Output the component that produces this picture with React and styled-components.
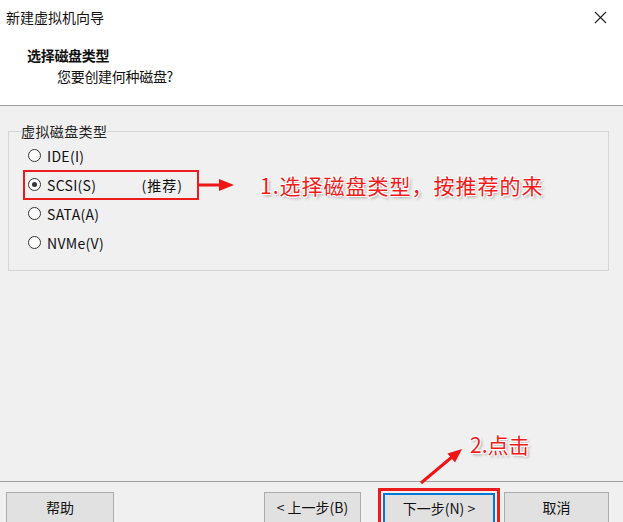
import styled, { createGlobalStyle } from "styled-components";

const GlobalStyle = createGlobalStyle`
  html, body {
    margin: 0;
    padding: 0;
    background: #f0f0f0;
  }
  * {
    box-sizing: border-box;
  }
`;

const options = [
  { id: "ide", label: "IDE(I)" },
  { id: "scsi", label: "SCSI(S)", tag: "(推荐)", checked: true },
  { id: "sata", label: "SATA(A)" },
  { id: "nvme", label: "NVMe(V)" },
];

export default function App() {
  return (
    <>
      <GlobalStyle />
      <Window>
        <Header>
          <TitleBar>
            <Title>新建虚拟机向导</Title>
            <CloseButton aria-label="关闭">
              <svg width="13" height="13" viewBox="0 0 13 13">
                <path d="M1 1 L12 12 M12 1 L1 12" stroke="#222" strokeWidth="1.1" />
              </svg>
            </CloseButton>
          </TitleBar>
          <Heading>选择磁盘类型</Heading>
          <SubHeading>您要创建何种磁盘?</SubHeading>
        </Header>

        <Body>
          <GroupBox>
            <Legend>虚拟磁盘类型</Legend>
            {options.map((opt) => (
              <OptionLine key={opt.id}>
                <Option $highlight={opt.checked}>
                  <Radio $checked={opt.checked} />
                  <OptionLabel>{opt.label}</OptionLabel>
                  {opt.tag && <Tag>{opt.tag}</Tag>}
                </Option>
                {opt.checked && (
                  <>
                    <svg width="36" height="14" viewBox="0 0 36 14">
                      <path d="M0 7 H22" stroke="#f01414" strokeWidth="3" />
                      <polygon points="20,1 35,7 20,13" fill="#f01414" />
                    </svg>
                    <Note $first>1.选择磁盘类型，按推荐的来</Note>
                  </>
                )}
              </OptionLine>
            ))}
          </GroupBox>
        </Body>

        <Footer>
          <Button $width={108}>帮助</Button>
          <Spacer />
          <Button $width={97}>&lt; 上一步(B)</Button>
          <Highlight>
            <Button $width={112} $primary>
              下一步(N) &gt;
            </Button>
          </Highlight>
          <Button $width={105}>取消</Button>
        </Footer>

        <ClickNote>
          <svg width="50" height="42" viewBox="0 0 50 42">
            <path d="M3 37 L34 11" stroke="#f01414" strokeWidth="3" />
            <polygon points="44,3 37,16.6 29.4,7.4" fill="#f01414" />
          </svg>
          <Note>2.点击</Note>
        </ClickNote>
      </Window>
    </>
  );
}

const Window = styled.div`
  position: relative;
  width: 623px;
  height: 522px;
  display: flex;
  flex-direction: column;
  background: #f0f0f0;
  overflow: hidden;
  font-family: "Noto Sans CJK SC", "Noto Sans", sans-serif;
  color: #111;
`;

const Header = styled.header`
  height: 106px;
  background: #fff;
  border-bottom: 1px solid #a0a0a0;
  display: flex;
  flex-direction: column;
`;

const TitleBar = styled.div`
  height: 34px;
  display: flex;
  align-items: center;
  justify-content: space-between;
  padding: 0 16px 0 6px;
`;

const Title = styled.span`
  font-size: 14px;
  letter-spacing: 0;
`;

const CloseButton = styled.span`
  display: flex;
  align-items: center;
`;

const Heading = styled.div`
  margin: 11px 0 0 27px;
  font-size: 14px;
  font-weight: 700;
  line-height: 20px;
  letter-spacing: -0.3px;
`;

const SubHeading = styled.div`
  margin: 1px 0 0 57px;
  font-size: 14px;
  line-height: 20px;
  letter-spacing: -0.3px;
`;

const Body = styled.main`
  flex: 1;
  border-bottom: 1px solid #a0a0a0;
  padding: 15px 0 0 8px;
`;

const GroupBox = styled.fieldset`
  width: 601px;
  margin: 0;
  padding: 0 0 13px 13px;
  border: 1px solid #d6d6d6;
`;

const Legend = styled.legend`
  padding: 0;
  margin-left: -1px;
  font-size: 14px;
  line-height: 20px;
  color: #222;
  letter-spacing: 0.4px;
`;

const OptionLine = styled.div`
  display: flex;
  align-items: center;
  height: 29px;
  margin-left: 1px;
`;

const Option = styled.div`
  width: 176px;
  height: 30px;
  display: flex;
  align-items: center;
  padding: 0 14px 0 3px;
  border: 2px solid ${(p) => (p.$highlight ? "#ec1c1c" : "transparent")};
  font-size: 14px;
`;

const Radio = styled.span`
  position: relative;
  width: 13px;
  height: 13px;
  border-radius: 50%;
  border: 1px solid #333;
  background: #fff;
  flex-shrink: 0;
  margin-right: 6px;
  &::after {
    content: "";
    display: ${(p) => (p.$checked ? "block" : "none")};
    position: absolute;
    left: 3px;
    top: 3px;
    width: 5px;
    height: 5px;
    border-radius: 50%;
    background: #333;
  }
`;

const OptionLabel = styled.span`
  line-height: 1;
  letter-spacing: 0.3px;
`;

const Tag = styled.span`
  margin-left: auto;
  line-height: 1;
  letter-spacing: 1px;
`;

const Note = styled.span`
  margin-left: ${(p) => (p.$first ? "25px" : "2px")};
  font-size: ${(p) => (p.$first ? "21px" : "21px")};
  color: #f51a1a;
  white-space: nowrap;
  letter-spacing: ${(p) => (p.$first ? "1px" : "0")};
  text-shadow: 1px 1px 0 #fff, -1px -1px 0 #fff, 1px -1px 0 #fff,
    -1px 1px 0 #fff, 2px 2px 3px rgba(0, 0, 0, 0.35);
`;

const Footer = styled.footer`
  height: 40px;
  display: flex;
  align-items: flex-start;
  padding: 10px 14px 0 6px;
`;

const Spacer = styled.div`
  flex: 1;
`;

const Button = styled.button`
  width: ${(p) => p.$width}px;
  height: 32px;
  margin: 0;
  background: #e1e1e1;
  border: ${(p) => (p.$primary ? "2px solid #0078d7" : "1px solid #adadad")};
  font-family: inherit;
  font-size: 14px;
  color: #111;
  padding: 0 0 3px;
`;

const Highlight = styled.div`
  margin: -4px 4px 0 17px;
  padding: 2px;
  border: 3px solid #ec1c1c;
  display: flex;
`;

const ClickNote = styled.div`
  position: absolute;
  left: 418px;
  top: 429px;
  display: flex;
  align-items: flex-start;
  & > svg {
    margin-top: 17px;
  }
`;
